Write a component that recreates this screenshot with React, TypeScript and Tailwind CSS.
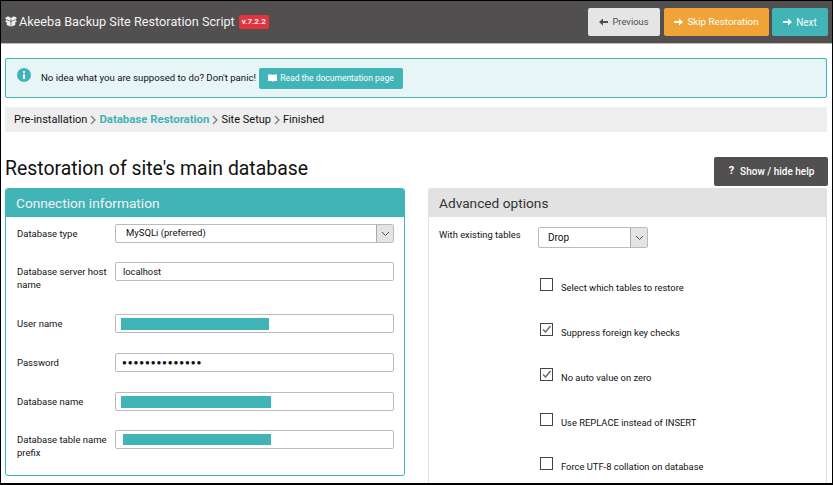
import React from "react";

const font = { fontFamily: 'Roboto, "Noto Sans", sans-serif' };

function Arrow({ left = false, color = "#fff" }: { left?: boolean; color?: string }) {
  return (
    <svg width="9" height="8" viewBox="0 0 9 8" className={left ? "rotate-180" : ""}>
      <path d="M0 3h5V0.5L9 4 5 7.5V5H0z" fill={color} />
    </svg>
  );
}

function Field({ label, children, h }: { label: React.ReactNode; children: React.ReactNode; h: string }) {
  return (
    <div className={`flex ${h}`}>
      <div className="w-[98px] shrink-0 whitespace-nowrap pt-[3px] text-[9.5px] leading-[13px] text-[#111]">{label}</div>
      <div className="flex-1">{children}</div>
    </div>
  );
}

function Input({ children }: { children?: React.ReactNode }) {
  return (
    <div className="flex h-[19px] w-[279px] items-center rounded-[2px] border border-[#bbb] bg-white text-[9.3px] text-[#111]">
      {children}
    </div>
  );
}

function Caret() {
  return (
    <div className="flex h-full w-[17px] items-center justify-center border-l border-[#aaa] bg-[#e4e4e4]">
      <svg width="9" height="6" viewBox="0 0 9 6">
        <path d="M1 1l3.500 3.500L8 1" fill="none" stroke="#555" strokeWidth="1" />
      </svg>
    </div>
  );
}

function Check({ label, checked = false, h }: { label: string; checked?: boolean; h: string }) {
  return (
    <div className={`flex items-start ${h}`}>
      <div className="relative mr-[8px] h-[13px] w-[13px] shrink-0 border border-[#444] bg-white">
        {checked && (
          <svg width="11" height="11" viewBox="0 0 11 11" className="absolute left-0 top-0">
            <path d="M2 5.500l2.500 2.500L9.500 2" fill="none" stroke="#666" strokeWidth="1.4" />
          </svg>
        )}
      </div>
      <span className="pt-[3px] text-[9.4px] leading-[13px] text-[#111]">{label}</span>
    </div>
  );
}

function Bar({ w, ml, h }: { w: string; ml: string; h: string }) {
  return <div className={`${w} ${ml} ${h} bg-[#41b4b7]`} />;
}

function Chevron() {
  return (
    <svg width="6" height="10" viewBox="0 0 6 10">
      <path d="M1 1l4 4-4 4" fill="none" stroke="#777" strokeWidth="1.2" />
    </svg>
  );
}

export default function App() {
  return (
    <div style={font} className="h-[485px] w-[833px] overflow-hidden border border-b-2 border-black bg-white">
      <header className="flex h-[43px] items-center justify-between border-b border-[#bbb] bg-[#514f50] pl-[4px] pr-[4px]">
        <div className="flex items-center">
          <svg width="12" height="11" viewBox="0 0 14 12" className="mr-[2px]">
            <path d="M0 2l3.500-2L7 2l3.500-2L14 2l-2 2 2 2-2 1v3l-5 2-5-2V7L0 6l2-2z" fill="#eee" />
            <path d="M7 3v9M2 4l5 2 5-2" stroke="#514f50" strokeWidth="0.8" fill="none" />
          </svg>
          <span className="text-[12.7px] text-[#f2f2f2]">Akeeba Backup Site Restoration Script</span>
          <span className="ml-[4px] flex h-[14px] w-[30px] items-center justify-center rounded-[2px] bg-[#e2343f] text-[8px] font-semibold text-white">v.7.2.2</span>
        </div>
        <div className="flex">
          <div className="flex h-[28px] w-[72px] items-center justify-center gap-[4px] rounded-[2px] bg-[#e5e5e5] text-[9.4px] text-[#514f50]">
            <Arrow left color="#514f50" />Previous
          </div>
          <div className="ml-[4px] flex h-[28px] w-[105px] items-center justify-center gap-[4px] rounded-[2px] bg-[#f0a336] text-[9.8px] text-white">
            <Arrow />Skip Restoration
          </div>
          <div className="ml-[3px] flex h-[28px] w-[56px] items-center justify-center gap-[4px] rounded-[2px] bg-[#41b4b7] text-[10px] text-white">
            <Arrow />Next
          </div>
        </div>
      </header>

      <main className="pl-[4px] pr-[5px]">
        <div className="mt-[14px] flex h-[40px] items-center rounded-[2px] border border-[#41b4b7] bg-[#e7f5f6] pl-[11px]">
          <svg width="14" height="14" viewBox="0 0 14 14" className="mb-[7px]">
            <circle cx="7" cy="7" r="7" fill="#41b4b7" />
            <rect x="6" y="6" width="2" height="5" fill="#e7f5f6" />
            <rect x="6" y="3" width="2" height="2" fill="#e7f5f6" />
          </svg>
          <span className="ml-[10px] w-[215px] whitespace-nowrap text-[9.65px] text-[#111]">No idea what you are supposed to do? Don't panic!</span>
          <div className="ml-[3px] flex h-[21px] w-[144px] items-center justify-center gap-[3px] rounded-[2px] bg-[#41b4b7] text-[8.5px] text-white">
            <svg width="9" height="8" viewBox="0 0 9 8"><path d="M0 0.500h3.500L4.500 1l1-.5H9V7H5.500L4.500 8l-1-1H0z" fill="#fff" /></svg>
            Read the documentation page
          </div>
        </div>

        <div className="mt-[9px] flex h-[25px] items-center gap-[3px] bg-[#eeeeee] pl-[9px] pt-[1px] text-[11px] text-[#111]">
          <span>Pre-installation</span>
          <Chevron />
          <span className="text-[11.4px] font-bold text-[#41b4b7]">Database Restoration</span>
          <Chevron />
          <span>Site Setup</span>
          <Chevron />
          <span>Finished</span>
        </div>

        <div className="flex h-[56px] items-end justify-between pb-[2px]">
          <h1 className="pb-[5px] text-[19.4px] leading-[24px] text-[#111]">Restoration of site's main database</h1>
          <div className="-mr-px flex h-[29px] w-[114px] items-center justify-center gap-[6px] rounded-[2px] bg-[#514f50] pl-[1px] text-[10px] font-medium text-white">
            <span className="text-[11px] font-bold">?</span>Show / hide help
          </div>
        </div>

        <div className="flex items-start justify-between">
          <section className="h-[288px] w-[400px] overflow-hidden rounded-[3px] border border-[#41b4b7]">
            <div className="flex h-[28px] items-center bg-[#41b4b7] pl-[10px] text-[13.7px] text-[#f2f2f2]">Connection information</div>
            <div className="pl-[11px] pt-[7px]">
              <Field label="Database type" h="h-[38px]">
                <div className="flex h-[19px] w-[279px] items-center justify-between overflow-hidden rounded-[2px] border border-[#bbb] text-[9.5px] text-[#111]">
                  <span className="pl-[10px]">MySQLi (preferred)</span>
                  <Caret />
                </div>
              </Field>
              <Field label={<>Database server host<br />name</>} h="h-[52px]">
                <Input><span className="pl-[7px]">localhost</span></Input>
              </Field>
              <Field label="User name" h="h-[39px]">
                <Input><Bar w="w-[148px]" ml="ml-[5px]" h="h-[12px]" /></Input>
              </Field>
              <Field label="Password" h="h-[39px]">
                <Input><span className="pl-[6px] text-[8px] tracking-[0.9px]">●●●●●●●●●●●●●●</span></Input>
              </Field>
              <Field label="Database name" h="h-[38px]">
                <Input><Bar w="w-[150px]" ml="ml-[5px]" h="h-[12px]" /></Input>
              </Field>
              <Field label={<>Database table name<br />prefix</>} h="h-[40px]">
                <Input><Bar w="w-[148px]" ml="ml-[7px]" h="h-[11px]" /></Input>
              </Field>
            </div>
          </section>

          <section className="h-[300px] w-[399px] rounded-t-[3px] border-x border-[#e2e2e2]">
            <div className="-mx-px flex h-[29px] items-center rounded-t-[3px] bg-[#e2e2e2] pl-[11px] pt-[1px] text-[13.7px] text-[#333]">Advanced options</div>
            <div className="pl-[10px] pt-[10px]">
              <div className="flex h-[40px]">
                <div className="w-[99px] shrink-0 whitespace-nowrap pt-[1px] text-[9.4px] leading-[13px] text-[#111]">With existing tables</div>
                <div className="flex h-[21px] w-[110px] items-center justify-between overflow-hidden rounded-[2px] border border-[#bbb] text-[10px] text-[#111]">
                  <span className="pl-[9px]">Drop</span>
                  <Caret />
                </div>
              </div>
              <div className="pl-[101px] pt-[11px]">
                <Check label="Select which tables to restore" h="h-[45px]" />
                <Check label="Suppress foreign key checks" checked h="h-[45px]" />
                <Check label="No auto value on zero" checked h="h-[45px]" />
                <Check label="Use REPLACE instead of INSERT" h="h-[44px]" />
                <Check label="Force UTF-8 collation on database" h="h-[20px]" />
              </div>
            </div>
          </section>
        </div>
      </main>
    </div>
  );
}
